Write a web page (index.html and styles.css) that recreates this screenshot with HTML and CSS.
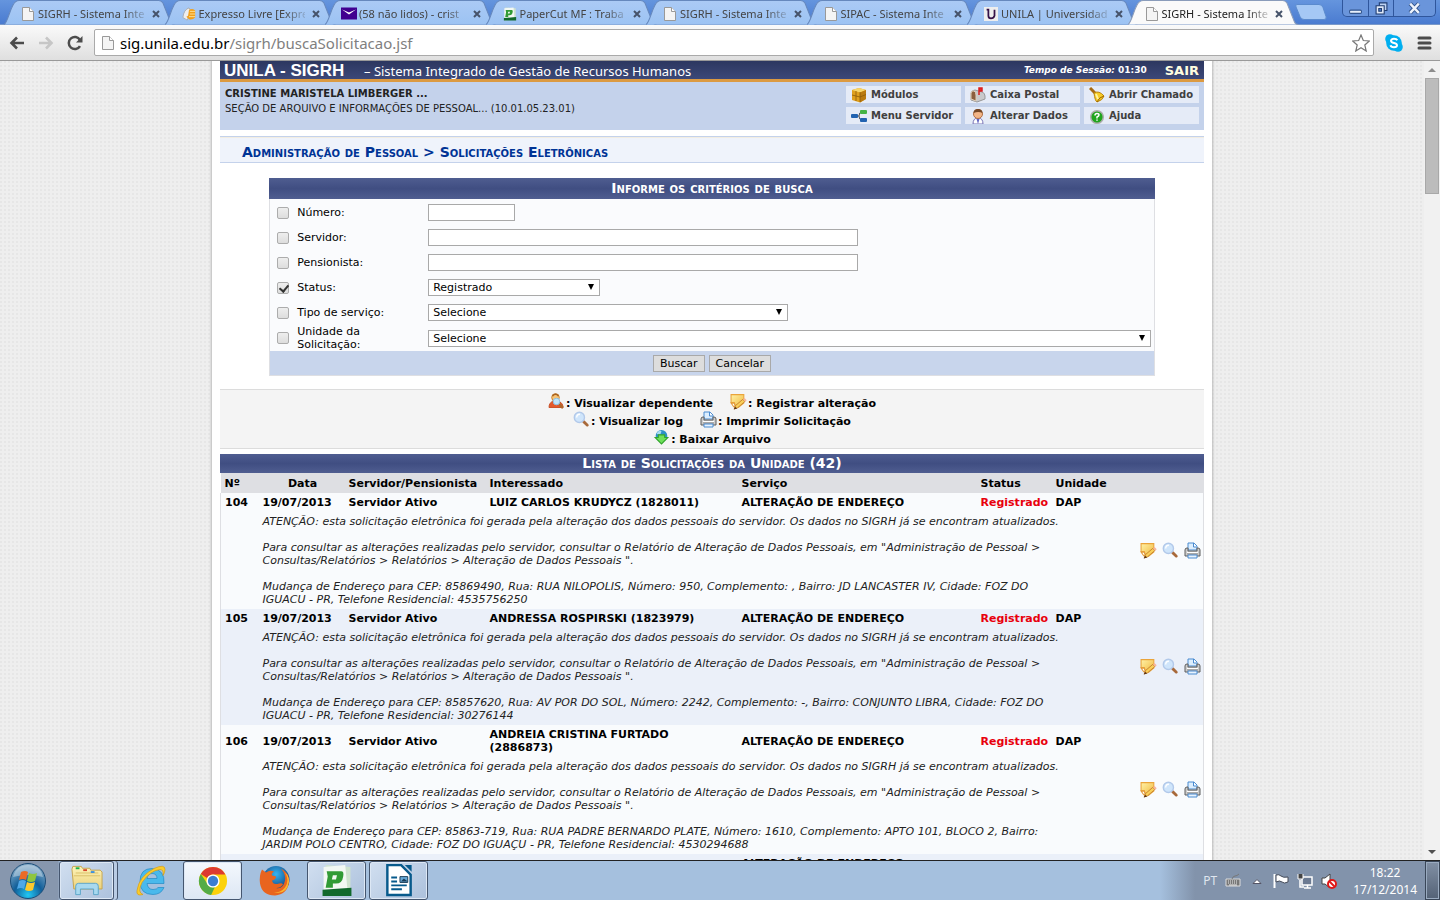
FILE: index.html
```html
<!DOCTYPE html>
<html lang="pt-BR">
<head>
<meta charset="utf-8">
<title>SIGRH - Sistema Integrado de Gestão de Recursos Humanos</title>
<link rel="stylesheet" href="styles.css">
</head>
<body>
<svg class="defs" aria-hidden="true">
  <defs>
    <linearGradient id="tabg" x1="0" y1="0" x2="0" y2="1"><stop offset="0" stop-color="#abcaf5"/><stop offset="1" stop-color="#9cc3f3"/></linearGradient>
    <linearGradient id="gold" x1="0" y1="0" x2="1" y2="1"><stop offset="0" stop-color="#fff2a8"/><stop offset="1" stop-color="#f0b73a"/></linearGradient>
    <radialGradient id="orb" cx=".5" cy=".9" r=".9"><stop offset="0" stop-color="#22c8f4"/><stop offset=".45" stop-color="#115f9a"/><stop offset="1" stop-color="#8fb2cc"/></radialGradient>
    <radialGradient id="globe" cx=".5" cy=".3" r=".7"><stop offset="0" stop-color="#35b5f2"/><stop offset="1" stop-color="#0c2a68"/></radialGradient>
    <linearGradient id="folder" x1="0" y1="0" x2="0" y2="1"><stop offset="0" stop-color="#fdf3b8"/><stop offset="1" stop-color="#ecd27c"/></linearGradient>
  </defs>
  <symbol id="tabshape" viewBox="0 0 172 25" preserveAspectRatio="none"><path d="M1 24.500C5 23 8 3 13 1.500Q14 .5 16 .5H155Q158 .5 159.500 3L167 22Q168 24.500 171 24.500"/></symbol>
  <symbol id="file" viewBox="0 0 13 14"><path d="M1 .5h7l4 4v9H1z" fill="#f4f4f4" stroke="#999"/><path d="M8 .5v4h4" fill="#fff" stroke="#999"/></symbol>
  <symbol id="note" viewBox="0 0 16 16"><path d="M1 1.500h12v8l-5 4-3-1.500-1-3H1z" fill="url(#gold)" stroke="#eaa43a"/><path d="M1 9.500h3l1 3.500H3.500z" fill="#fff" stroke="#e39a3a"/><path d="M5 12l7-6 2 2-7 6-3 1z" fill="#f9cf58" stroke="#c07a2b" stroke-width=".8"/><path d="M13 5.500l2 2" stroke="#f7b49b" stroke-width="2"/><path d="M3.500 15.500l1.300-2.500 2 1.500z" fill="#5d3211"/></symbol>
  <symbol id="lens" viewBox="0 0 16 16"><path d="M10 10l3.500 3.300" stroke="#a8693a" stroke-width="2.600" stroke-linecap="round"/><circle cx="6" cy="6" r="4.800" fill="#cfe5fb" stroke="#b2c9ea" stroke-width="1.300"/><path d="M3.500 6q0-3 3-3" stroke="#fff" stroke-width="1.300" fill="none"/></symbol>
  <symbol id="printer" viewBox="0 0 17 17"><path d="M4 8V1h6l3 3v4z" fill="#dceefe" stroke="#4a8bd0"/><path d="M9.500 1v4H13" fill="#fff" stroke="#4a8bd0"/><path d="M1 8q0-2 2-2h1v3h9V6h1q2 0 2 2v6H1z" fill="#ccc" stroke="#5e5e5e"/><path d="M3 10.500h11" stroke="#fff"/><path d="M3 12h11" stroke="#888"/><path d="M4 13h9v3H4z" fill="#e8f3fe" stroke="#4a8bd0"/></symbol>
  <symbol id="person" viewBox="0 0 17 17"><path d="M1 14.500q0-5.500 5-6.500h3q6 1 6 6.500z" fill="#e4592c" stroke="#c9532b"/><circle cx="7.500" cy="4.500" r="3.800" fill="#f7c374" stroke="#c98330"/><path d="M4.500 3q3-3.500 6 0" stroke="#a8621f" stroke-width="1.500" fill="none"/><path d="M11 11l4 4" stroke="#b0682e" stroke-width="2.500"/><circle cx="8.500" cy="8.500" r="3.300" fill="#bee4fb" stroke="#8fbfe0"/></symbol>
  <symbol id="down" viewBox="0 0 16 16"><circle cx="8" cy="6.500" r="5.500" fill="#2c91c7"/><path d="M3.500 4q2-3 4.500-2L7 5H4z" fill="#a9dcf2"/><path d="M5 5.500h6V8h3L8 14 2 8h3z" fill="#6fe05a" stroke="#32a52c"/></symbol>
  <symbol id="cube" viewBox="0 0 16 16"><path d="M1 3l7-2 7 2v9l-6 3.500L1 13z" fill="#dfa01d"/><path d="M1 3l7-2 7 2-6 2.500z" fill="#f7d66a"/><path d="M9 5.500L15 3v9l-6 3.500z" fill="#b97a10"/><path d="M1 8l8 2 6-2.500M5 4v10M9 5v10" stroke="#8d5c08" stroke-width=".8" fill="none"/></symbol>
  <symbol id="mail" viewBox="0 0 16 16"><path d="M1 13V6q1-3 4-3l7 2q3 1 3 4v3l-8 3z" fill="#c9c9cb" stroke="#999"/><path d="M1 6q1-3 3-2 2 1 2 4v6l-5-2z" fill="#8b5e3f" stroke="#e0cfba"/><path d="M9 8V1h3v3H9" stroke="#d91f20" stroke-width="1.500" fill="#ee2828"/></symbol>
  <symbol id="bell" viewBox="0 0 16 16"><path d="M1 1l6 6" stroke="#a66a12" stroke-width="3"/><path d="M5 6q5-3 10 3-1 4-7 6-2-1-3-9z" fill="#f7cc26" stroke="#b98410"/><path d="M8 15q2-5 7-6" fill="none" stroke="#9b6505"/><path d="M7 7l2 5" stroke="#fff4a0" stroke-width="2"/></symbol>
  <symbol id="tree" viewBox="0 0 16 16"><path d="M5 8h3m3-4q-3 0-3 4t3 4" fill="none" stroke="#555"/><rect y="6" width="7" height="4" rx="1" fill="#2162b0"/><rect x="9" y="2" width="7" height="4" rx="1" fill="#43b346"/><rect x="9" y="10" width="7" height="4" rx="1" fill="#2162b0"/></symbol>
  <symbol id="user" viewBox="0 0 16 16"><path d="M3 16q0-6 5-6t5 6z" fill="#fff" stroke="#7773b5"/><circle cx="8" cy="6" r="4.500" fill="#f2b587" stroke="#b06f45"/><path d="M3.500 5q0-4 4.500-4t4.500 4q-4-2-9 0z" fill="#754726"/><path d="M6.500 11L8 16l1.500-5z" fill="#6165c4"/></symbol>
  <symbol id="help" viewBox="0 0 16 16"><circle cx="8" cy="9" r="6.300" fill="#21a51e" stroke="#adadad" stroke-width="1.500"/><path d="M6 7.500q0-2 2-2t2 1.500q0 1-2 2v1.500m0 1v1.300" stroke="#fff" stroke-width="1.500" fill="none"/></symbol>
  <symbol id="pcut" viewBox="0 0 30 32"><path d="M4 1l24 2v24l-25 4z" fill="#cfe3cf"/><path d="M2 3l21-2 2 23-23 4z" fill="#f3f8f3"/><path d="M1 25l28-2v8H1z" fill="#11692c"/><path fill-rule="evenodd" d="M5 7h14q3 0 2 5-1 7-7 7h-3v4H4l2-11zM11 11l-1 4h4l1-4z" fill="#319b35"/></symbol>
</svg>

<header class="tabstrip">
  <nav class="tabs" aria-label="Abas">
    <div class="tab"><svg class="shape"><use href="#tabshape"/></svg><svg class="fav"><use href="#file"/></svg><span>SIGRH - Sistema Inte</span><button aria-label="Fechar"><svg viewBox="0 0 8 8"><path d="M1 1l6 6M7 1L1 7"/></svg></button></div>
    <div class="tab"><svg class="shape"><use href="#tabshape"/></svg><svg class="fav" viewBox="0 0 16 16"><path d="M1 12Q2 3 8 1l2 3-4 11z" fill="#eee" stroke="#aaa"/><path d="M8 3q5-2 7 1v8q-3 3-7 2l-3-3 2-1z" fill="#f2a01b"/><path d="M9 5h6M9 8h6M8 11h7" stroke="#ffe6a0"/></svg><span>Expresso Livre [Expre</span><button aria-label="Fechar"><svg viewBox="0 0 8 8"><path d="M1 1l6 6M7 1L1 7"/></svg></button></div>
    <div class="tab"><svg class="shape"><use href="#tabshape"/></svg><svg class="fav" viewBox="0 0 16 13"><path d="M0 0h16v12H0z" fill="#400090"/><path d="M1 2l7 5 7-5-7 3z" fill="#fff"/></svg><span>(58 não lidos) - crist</span><button aria-label="Fechar"><svg viewBox="0 0 8 8"><path d="M1 1l6 6M7 1L1 7"/></svg></button></div>
    <div class="tab"><svg class="shape"><use href="#tabshape"/></svg><svg class="fav"><use href="#pcut"/></svg><span>PaperCut MF : Traba</span><button aria-label="Fechar"><svg viewBox="0 0 8 8"><path d="M1 1l6 6M7 1L1 7"/></svg></button></div>
    <div class="tab"><svg class="shape"><use href="#tabshape"/></svg><svg class="fav"><use href="#file"/></svg><span>SIGRH - Sistema Inte</span><button aria-label="Fechar"><svg viewBox="0 0 8 8"><path d="M1 1l6 6M7 1L1 7"/></svg></button></div>
    <div class="tab"><svg class="shape"><use href="#tabshape"/></svg><svg class="fav"><use href="#file"/></svg><span>SIPAC - Sistema Inte</span><button aria-label="Fechar"><svg viewBox="0 0 8 8"><path d="M1 1l6 6M7 1L1 7"/></svg></button></div>
    <div class="tab"><svg class="shape"><use href="#tabshape"/></svg><svg class="fav" viewBox="0 0 16 16"><path d="M0 0h16v16H0z" fill="#eee"/><path d="M3 3h2v7q0 3 3 3t4-3V3" fill="none" stroke="#351248" stroke-width="2"/></svg><span>UNILA | Universidad</span><button aria-label="Fechar"><svg viewBox="0 0 8 8"><path d="M1 1l6 6M7 1L1 7"/></svg></button></div>
    <div class="tab active"><svg class="shape"><use href="#tabshape"/></svg><svg class="fav"><use href="#file"/></svg><span>SIGRH - Sistema Inte</span><button aria-label="Fechar"><svg viewBox="0 0 8 8"><path d="M1 1l6 6M7 1L1 7"/></svg></button></div>
  </nav>
  <button class="newtab" aria-label="Nova aba"><svg viewBox="0 0 32 16"><path d="M2 .5h22q3 0 4 3l3 9q1 3-2 3H9q-3 0-4-3L1 3Q0 .5 2 .5z" fill="#a5c8f5" stroke="#5b8bce"/></svg></button>
  <div class="wincontrols">
    <button aria-label="Minimizar"><svg viewBox="0 0 12 12"><rect x=".5" y="7.500" width="11" height="3" rx="1" fill="#e8f0fb" stroke="#33568f"/></svg></button>
    <button aria-label="Restaurar"><svg viewBox="0 0 12 12"><path d="M4 .8h7v7H4z" fill="#bdd3f3" stroke="#1f3c70"/><path d="M1 3.500h7.500v7.500H1z" fill="#dfe9f8" stroke="#1f3c70"/><path d="M3.500 6h2.500v2.500H3.500z" fill="#4d7dce" stroke="#1f3c70"/></svg></button>
    <button aria-label="Fechar janela"><svg viewBox="0 0 12 12"><path d="M2 1.500l8 8.500M10 1.500L2 10" stroke="#33568f" stroke-width="4"/><path d="M2 1.500l8 8.500M10 1.500L2 10" stroke="#edf3fc" stroke-width="2.200"/></svg></button>
  </div>
</header>

<div class="toolbar">
  <button aria-label="Voltar"><svg viewBox="0 0 16 16"><path d="M15 8H3M8 2.500L2.500 8 8 13.500" stroke="#4c4c4c" stroke-width="2.600" fill="none"/></svg></button>
  <button aria-label="Avançar"><svg viewBox="0 0 16 16"><path d="M1 8h12M8 2.500L13.500 8 8 13.500" stroke="#c6c6c6" stroke-width="2.600" fill="none"/></svg></button>
  <button aria-label="Recarregar"><svg viewBox="0 0 16 16"><path d="M13 11a6 6 0 1 1 0-6" stroke="#4c4c4c" stroke-width="2.500" fill="none"/><path d="M15.500 1v6.500H9z" fill="#4c4c4c"/></svg></button>
  <div class="address">
    <svg class="fav"><use href="#file"/></svg>
    <p>sig.unila.edu.br<span>/sigrh/buscaSolicitacao.jsf</span></p>
    <svg class="star" viewBox="0 0 18 18"><path d="M9 1l2.300 5.500 6 .5-4.500 4 1.400 6L9 13.800 3.800 17l1.400-6L.7 7l6-.5z" fill="#fff" stroke="#777" stroke-width="1.200"/></svg>
  </div>
  <button aria-label="Skype"><svg class="big" viewBox="0 0 18 18"><circle cx="9" cy="9" r="7.800" fill="#00aff0"/><circle cx="5" cy="5" r="4.800" fill="#00aff0"/><circle cx="13" cy="13" r="4.800" fill="#00aff0"/><path d="M12.300 6.300Q11.500 4.700 9 4.700T6 6.700Q6 8.300 9 9t3 2.300q0 2-3 2t-3.500-2" fill="none" stroke="#fff" stroke-width="2"/></svg></button>
  <button aria-label="Menu"><svg viewBox="0 0 16 16"><path d="M3 3h11M3 8h11M3 13h11" stroke="#4c4c4c" stroke-width="3" stroke-linecap="round"/></svg></button>
</div>

<div class="viewport">
  <div class="canvas">
  <main class="page">
    <header class="brand">
      <strong>UNILA - SIGRH</strong><span class="sub">– Sistema Integrado de Gestão de Recursos Humanos</span>
      <span class="session"><em>Tempo de Sessão:</em> 01:30</span><a class="exit" href="#">SAIR</a>
    </header>
    <section class="userbar">
      <div class="who"><strong>CRISTINE MARISTELA LIMBERGER ...</strong><p>SEÇÃO DE ARQUIVO E INFORMAÇÕES DE PESSOAL... (10.01.05.23.01)</p></div>
      <nav class="links">
        <a href="#"><svg><use href="#cube"/></svg>Módulos</a>
        <a href="#"><svg><use href="#mail"/></svg>Caixa Postal</a>
        <a href="#"><svg><use href="#bell"/></svg>Abrir Chamado</a>
        <a href="#"><svg><use href="#tree"/></svg>Menu Servidor</a>
        <a href="#"><svg><use href="#user"/></svg>Alterar Dados</a>
        <a href="#"><svg><use href="#help"/></svg>Ajuda</a>
      </nav>
    </section>
    <h1 class="crumb">Administração de Pessoal &gt; Solicitações Eletrônicas</h1>

    <form class="search">
      <h2 class="bar">Informe os critérios de busca</h2>
      <div class="row"><input type="checkbox" id="c1"><label for="c1">Número:</label><input class="num" type="text" aria-label="Número"></div>
      <div class="row"><input type="checkbox" id="c2"><label for="c2">Servidor:</label><input class="txt" type="text" aria-label="Servidor"></div>
      <div class="row"><input type="checkbox" id="c3"><label for="c3">Pensionista:</label><input class="txt" type="text" aria-label="Pensionista"></div>
      <div class="row"><input type="checkbox" id="c4" checked><label for="c4">Status:</label><span class="pick status"><select aria-label="Status"><option>Registrado</option></select></span></div>
      <div class="row"><input type="checkbox" id="c5"><label for="c5">Tipo de serviço:</label><span class="pick type"><select aria-label="Tipo de serviço"><option>Selecione</option></select></span></div>
      <div class="row"><input type="checkbox" id="c6"><label for="c6">Unidade da Solicitação:</label><span class="pick unit"><select aria-label="Unidade da Solicitação"><option>Selecione</option></select></span></div>
      <div class="actions"><button type="button">Buscar</button><button type="button">Cancelar</button></div>
    </form>

    <section class="legend">
      <p><span><svg><use href="#person"/></svg>: Visualizar dependente</span><span><svg><use href="#note"/></svg>: Registrar alteração</span></p>
      <p><span><svg><use href="#lens"/></svg>: Visualizar log</span><span><svg><use href="#printer"/></svg>: Imprimir Solicitação</span></p>
      <p><span><svg><use href="#down"/></svg>: Baixar Arquivo</span></p>
    </section>

    <table class="list">
      <caption class="bar">Lista de Solicitações da Unidade (42)</caption>
      <colgroup><col class="k1"><col class="k2"><col class="k3"><col class="k4"><col class="k5"><col class="k6"><col><col class="k8"></colgroup>
      <thead><tr><th>Nº</th><th class="mid">Data</th><th>Servidor/Pensionista</th><th>Interessado</th><th>Serviço</th><th>Status</th><th>Unidade</th><th></th></tr></thead>
      <tbody>
        <tr class="main"><td>104</td><td>19/07/2013</td><td>Servidor Ativo</td><td>LUIZ CARLOS KRUDYCZ (1828011)</td><td>ALTERAÇÃO DE ENDEREÇO</td><td class="red">Registrado</td><td>DAP</td><td rowspan="2" class="acts"><div><a href="#" aria-label="Registrar alteração"><svg><use href="#note"/></svg></a><a href="#" aria-label="Visualizar log"><svg><use href="#lens"/></svg></a><a href="#" aria-label="Imprimir"><svg><use href="#printer"/></svg></a></div></td></tr>
        <tr class="desc"><td></td><td colspan="6"><p>ATENÇÃO: esta solicitação eletrônica foi gerada pela alteração dos dados pessoais do servidor. Os dados no SIGRH já se encontram atualizados.</p><p>Para consultar as alterações realizadas pelo servidor, consultar o Relatório de Alteração de Dados Pessoais, em "Administração de Pessoal &gt; Consultas/Relatórios &gt; Relatórios &gt; Alteração de Dados Pessoais ".</p><p>Mudança de Endereço para CEP: 85869490, Rua: RUA NILOPOLIS, Número: 950, Complemento: , Bairro: JD LANCASTER IV, Cidade: FOZ DO IGUACU - PR, Telefone Residencial: 4535756250</p></td></tr>
      </tbody>
      <tbody>
        <tr class="main"><td>105</td><td>19/07/2013</td><td>Servidor Ativo</td><td>ANDRESSA ROSPIRSKI (1823979)</td><td>ALTERAÇÃO DE ENDEREÇO</td><td class="red">Registrado</td><td>DAP</td><td rowspan="2" class="acts"><div><a href="#" aria-label="Registrar alteração"><svg><use href="#note"/></svg></a><a href="#" aria-label="Visualizar log"><svg><use href="#lens"/></svg></a><a href="#" aria-label="Imprimir"><svg><use href="#printer"/></svg></a></div></td></tr>
        <tr class="desc"><td></td><td colspan="6"><p>ATENÇÃO: esta solicitação eletrônica foi gerada pela alteração dos dados pessoais do servidor. Os dados no SIGRH já se encontram atualizados.</p><p>Para consultar as alterações realizadas pelo servidor, consultar o Relatório de Alteração de Dados Pessoais, em "Administração de Pessoal &gt; Consultas/Relatórios &gt; Relatórios &gt; Alteração de Dados Pessoais ".</p><p>Mudança de Endereço para CEP: 85857620, Rua: AV POR DO SOL, Número: 2242, Complemento: -, Bairro: CONJUNTO LIBRA, Cidade: FOZ DO IGUACU - PR, Telefone Residencial: 30276144</p></td></tr>
      </tbody>
      <tbody>
        <tr class="main"><td>106</td><td>19/07/2013</td><td>Servidor Ativo</td><td>ANDREIA CRISTINA FURTADO (2886873)</td><td>ALTERAÇÃO DE ENDEREÇO</td><td class="red">Registrado</td><td>DAP</td><td rowspan="2" class="acts"><div><a href="#" aria-label="Registrar alteração"><svg><use href="#note"/></svg></a><a href="#" aria-label="Visualizar log"><svg><use href="#lens"/></svg></a><a href="#" aria-label="Imprimir"><svg><use href="#printer"/></svg></a></div></td></tr>
        <tr class="desc"><td></td><td colspan="6"><p>ATENÇÃO: esta solicitação eletrônica foi gerada pela alteração dos dados pessoais do servidor. Os dados no SIGRH já se encontram atualizados.</p><p>Para consultar as alterações realizadas pelo servidor, consultar o Relatório de Alteração de Dados Pessoais, em "Administração de Pessoal &gt; Consultas/Relatórios &gt; Relatórios &gt; Alteração de Dados Pessoais ".</p><p>Mudança de Endereço para CEP: 85863-719, Rua: RUA PADRE BERNARDO PLATE, Número: 1610, Complemento: APTO 101, BLOCO 2, Bairro: JARDIM POLO CENTRO, Cidade: FOZ DO IGUAÇU - PR, Telefone Residencial: 4530294688</p></td></tr>
      </tbody>
      <tbody>
        <tr class="main"><td></td><td></td><td></td><td></td><td>ALTERAÇÃO DE ENDEREÇO</td><td></td><td></td><td></td></tr>
      </tbody>
    </table>
  </main>
  </div>
  <div class="scroll"><svg viewBox="0 0 16 16"><path d="M4 11l4-4 4 4z" fill="#8c8c8c"/></svg><div class="thumb"></div><svg class="end" viewBox="0 0 16 16"><path d="M4 6l4 4 4-4z" fill="#505050"/></svg></div>
</div>

<footer class="taskbar">
  <button class="start" aria-label="Iniciar"><svg viewBox="0 0 36 36"><circle cx="18" cy="18" r="17.500" fill="url(#orb)" stroke="#1c4d78"/><path d="M3 14Q6 2 18 2t15 12Q18 10 3 14z" fill="#fff" opacity=".35"/><path d="M11 9q4-2 7 0l-2 8q-3-2-7 0z" fill="#ea6b27"/><path d="M19 10q4 2 8 0l-2 8q-4 2-8 0z" fill="#8ec63f"/><path d="M9 18q4-2 7 0l-2 8q-3-2-7 0z" fill="#4fa8e8"/><path d="M17 19q4 2 8 0l-2 8q-4 2-8 0z" fill="#fdc92d"/></svg></button>
  <button class="task stack" aria-label="Explorer"><svg viewBox="0 0 34 32"><path d="M1 4l1-3h9l1 2h8l1 2h10l2 2v18H3z" fill="url(#folder)" stroke="#c4a34c"/><path d="M3 11h28M5 8h24" stroke="#d9bd67"/><path d="M5 2h4v2H5z" fill="#18b04b"/><path d="M13 4h4v2h-4z" fill="#d8452a"/><path d="M21 6h4v2h-4z" fill="#3a8fe0"/><path d="M5 31V22q0-3 3-3h18q3 0 3 3v9h-5v-6H10v6z" fill="#a8d9ef" stroke="#5ba4c7"/></svg></button>
  <button class="task plain" aria-label="Internet Explorer"><svg viewBox="0 0 32 32"><path fill-rule="evenodd" d="M29 19H12q1 6 6 6 4 0 5-2h6q-3 7-11 7Q5 30 5 17T17 4q13 1 12 15zM12 14h10q0-5-5-5-4 0-5 5z" fill="#49b9ec" stroke="#2489c4" stroke-width=".7"/><path d="M8 30Q1 32 2 26 4 12 19 4 30-1 30 5q0 3-2 6 1-6-3-6Q15 6 7 18 2 28 8 30z" fill="#f9cc2c" stroke="#d79c16" stroke-width=".7"/></svg></button>
  <button class="task lit" aria-label="Chrome"><svg class="mid" viewBox="0 0 32 32"><circle cx="16" cy="16" r="15" fill="#fcd20b"/><path d="M3 8.500A15 15 0 0 1 29.200 9H16a7 7 0 0 0-6 4z" fill="#dd3a31"/><path d="M3 8.500L10 19a7 7 0 0 0 8 3.500L14 31A15 15 0 0 1 3 8.500z" fill="#54ac47"/><circle cx="16" cy="16" r="7" fill="#fff"/><circle cx="16" cy="16" r="5.500" fill="#3b7dd0"/></svg></button>
  <button class="task plain" aria-label="Firefox"><svg viewBox="0 0 32 32"><circle cx="17" cy="15" r="13.500" fill="url(#globe)"/><path d="M3 5l4 3q4-3 8-1-3 2-2 4l4 1q0 3-4 4 1 5 7 3 3-1 4 1-4 5-9 3 9 3 11-7 1-6-4-12 9 5 8 14-2 12-14 13Q3 31 1 19 0 11 3 5z" fill="#e9641f"/><path d="M26 8q5 8 0 15-5 6-12 5 14 3 16-11 0-6-4-9z" fill="#fbb52c"/></svg></button>
  <button class="task" aria-label="PaperCut"><svg viewBox="0 0 30 32"><use href="#pcut"/></svg></button>
  <button class="task" aria-label="LibreOffice Writer"><svg viewBox="0 0 32 34"><path d="M4 1h14l10 10v21H4z" fill="#fff" stroke="#075a8c" stroke-width="2.500"/><path d="M22 1h7v7z" fill="#075a8c"/><path d="M8 14h6M8 18h6M8 22h16M8 26h11" stroke="#075a8c" stroke-width="2"/><path d="M17 13h8v6h-8z" fill="#65a9d8" stroke="#1b3d57"/><path d="M18 18l3-3 4 3z" fill="#1b3d57"/></svg></button>
  <div class="tray">
    <span class="lang">PT</span>
    <svg viewBox="0 0 16 16"><path d="M1 6h14v7H1z" fill="#777" stroke="#ddd"/><path d="M3 8h10M3 10h10" stroke="#eee" stroke-dasharray="1 1"/><path d="M4 12h8" stroke="#eee"/><path d="M7 6q1-3 3-3t4-2" stroke="#777" fill="none"/></svg>
    <svg viewBox="0 0 16 16"><path d="M4 10.500l4-4 4 4z" fill="#fff" stroke="#556"/></svg>
    <svg viewBox="0 0 16 16"><path d="M1.500 1v14" stroke="#fff" stroke-width="2"/><path d="M3 2q3-1 5 1t7 1v5q-4 2-6 0T3 9z" fill="#fff" stroke="#444b59"/></svg>
    <svg viewBox="0 0 16 16"><path d="M5 4h10v8H5z" fill="#6b7a92" stroke="#fff" stroke-width="1.500"/><path d="M7 15h7M10.500 12v3M3 7v7h4" stroke="#fff" stroke-width="1.500" fill="none"/><path d="M1 1v5h5V1" fill="#444" stroke="#fff"/></svg>
    <svg viewBox="0 0 16 16"><path d="M1 5h3l5-4v14l-5-4H1z" fill="#fff" stroke="#444"/><circle cx="11" cy="11" r="4" fill="#fff" stroke="#e01818" stroke-width="2"/><path d="M8 8l6 6" stroke="#e01818" stroke-width="2"/></svg>
    <div class="clock"><span>18:22</span><span>17/12/2014</span></div>
    <div class="desk"></div>
  </div>
</footer>
</body>
</html>
```

FILE: styles.css
```css
* { box-sizing: border-box; }
html, body { height: 100%; }
body { margin: 0; display: flex; flex-direction: column; overflow: hidden; font: 11px/13px Verdana, "DejaVu Sans", sans-serif; color: #000; }
p, h1, h2 { margin: 0; }
button { font: inherit; padding: 0; border: 0; background: none; }
a { color: inherit; text-decoration: none; }
svg { display: block; }
.defs { position: absolute; width: 0; height: 0; }

/* window chrome */
.tabstrip { height: 25px; flex: none; display: flex; background: linear-gradient(#6595de, #4a7bd0); font: 11px/16px "Segoe UI", "Noto Sans", sans-serif; border-bottom: 1px solid #7a99c9; }
.tabs { display: flex; flex: 0 1 1299px; min-width: 0; padding-left: 3px; }
.tab { position: relative; flex: 1; min-width: 0; height: 25px; display: flex; align-items: center; gap: 2px; padding: 2px 15px 0 17px; margin-right: -12px; color: #444; }
.tab:last-child { margin-right: 0; }
.tab .shape { position: absolute; left: 0; top: 0; width: 100%; height: 25px; fill: url(#tabg); stroke: #6688bd; }
.tab.active { z-index: 1; color: #222; }
.tab.active .shape { fill: #fafafa; stroke: #8a9cba; }
.fav { position: relative; width: 16px; height: 14px; flex: none; }
.tab span { position: relative; flex: 1; min-width: 0; white-space: nowrap; -webkit-mask-image: linear-gradient(to right, #000 80%, transparent 105%); mask-image: linear-gradient(to right, #000 80%, transparent 105%); }
.tab button { position: relative; width: 14px; flex: none; }
.tab button svg { width: 8px; height: 8px; margin-left: 5px; stroke: #46536a; stroke-width: 2; }
.newtab { width: 32px; flex: none; margin-left: -4px; }
.newtab svg { width: 32px; height: 16px; }
.wincontrols { margin: 0 4px 0 auto; display: flex; height: 17px; border: 1px solid #2f569c; border-top: 0; border-radius: 0 0 5px 5px; background: #6a95db; }
.wincontrols button { width: 25px; display: grid; place-items: center; border-left: 1px solid #2f569c; }
.wincontrols button:first-child { border-left: 0; }
.wincontrols button:last-child { width: 42px; }
.wincontrols svg { width: 13px; height: 13px; }

.toolbar { height: 36px; flex: none; display: flex; align-items: center; gap: 13px; padding: 0 8px 0 9px; background: linear-gradient(#fafafa, #dfdfdf); border-bottom: 1px solid #999; }
.toolbar button svg { width: 16px; height: 16px; }
.toolbar button svg.big { width: 18px; height: 18px; }
.address { flex: 1; height: 27px; margin: 0 -2px 0 -2px; display: flex; align-items: center; gap: 4px; padding: 0 3px 0 5px; background: #fff; border: 1px solid #aaa; border-radius: 2px; font: 15px/20px "Segoe UI", "Noto Sans", sans-serif; }
.address p { flex: 1; }
.address p span { color: #808080; }
.address .star { width: 18px; height: 18px; }

/* scrolled document */
.viewport { flex: 1; min-height: 0; display: flex; }
.canvas { flex: 1; min-width: 0; overflow: hidden; background: radial-gradient(circle at 1px 1px, #e6e6e6 1px, transparent 1px) 0 0 / 4px 4px #eee; }
.page { max-width: 1000px; min-height: 100%; margin: 0 auto; padding: 0 8px; background: #fff; box-shadow: 0 0 2px 1px #bbb; }
.scroll { width: 16px; flex: none; display: flex; flex-direction: column; background: #f1f1f1; }
.scroll svg { width: 16px; height: 16px; }
.scroll .thumb { height: 116px; margin: 1px; background: #bcbcbc; border: 1px solid #a8a8a8; }
.scroll .end { margin-top: auto; }

.brand { height: 21px; display: flex; align-items: center; padding: 1px 5px 0 4px; color: #fff; background: linear-gradient(#2c3760, #3c4878); border-bottom: 3px solid #dc9a41; }
.brand strong { font: bold 17px/18px Arial, "Liberation Sans", sans-serif; width: 140px; }
.brand .sub { font: 13px/18px Tahoma, "Noto Sans", sans-serif; }
.brand .session { margin-left: auto; font-size: 9px; font-weight: bold; }
.brand .exit { margin-left: 18px; font-size: 13px; font-weight: bold; color: #fffde0; }
.userbar { height: 48px; display: flex; justify-content: space-between; padding: 4px 5px; background: #c4d2eb; color: #222; font-size: 10px; line-height: 15px; }
.links { display: grid; grid-template-columns: repeat(3, 115px); grid-auto-rows: 17px; gap: 4px; }
.links a { display: flex; align-items: center; gap: 4px; padding-left: 5px; background: #e5ebf7; color: #404040; font-weight: bold; }
.links svg { width: 16px; height: 16px; flex: none; }
.crumb { margin-top: 6px; padding: 8px 22px 2px; background: #eff3fb; border-top: 1px solid #c4d2eb; border-bottom: 1px solid #c4d2eb; box-shadow: inset 0 1px #f2ede2; font-size: 14px; line-height: 15px; font-variant: small-caps; color: #003395; }
.bar { color: #fff; text-align: center; font-size: 14px; font-variant: small-caps; font-weight: bold; background: linear-gradient(#4f5d90, #404e82 50%, #4f5d90); }

.search { width: 90%; margin: 15px auto 0; border: 1px solid #dedfe3; border-top: 0; background: #fafbfd; }
.search h2 { line-height: 21px; margin: 0 -1px 1px; }
.row { min-height: 25px; display: flex; align-items: center; padding: 0 3px 0 7px; }
.row label { width: 139px; padding: 0 30px 0 8px; flex: none; }
.row input[type=checkbox] { appearance: none; position: relative; width: 12px; height: 12px; flex: none; margin: 0; border: 1px solid #acacac; border-radius: 2px; background: linear-gradient(#eee, #ddd); }
.row input:checked::after { content: ""; position: absolute; left: 3px; top: 0; width: 4px; height: 7px; border: solid #333; border-width: 0 2px 2px 0; transform: rotate(40deg); }
.row input[type=text], .row select { height: 17px; border: 1px solid #a9a9a9; border-radius: 0; background: #fff; padding: 0 4px; font: inherit; color: #000; }
.num { width: 87px; }
.txt { width: 430px; }
.pick { position: relative; }
.pick select { appearance: none; display: block; width: 100%; }
.pick::after { content: ""; position: absolute; right: 6px; top: 5px; border: 3px solid transparent; border-top: 6px solid #000; border-bottom: 0; pointer-events: none; }
.status { width: 172px; }
.type { width: 360px; }
.unit { flex: 1; }
.actions { height: 24px; display: flex; justify-content: center; align-items: center; gap: 4px; background: #c8d5ec; }
.actions button { height: 17px; padding: 0 6px; border: 1px solid #a9a9a9; background: #ddd; }

.legend { margin: 13px 0 5px; padding: 4px 0 0; background: #f4f4f4; border: solid #dcdcdc; border-width: 1px 0; font-weight: bold; }
.legend p { display: flex; justify-content: center; gap: 17px; height: 18px; }
.legend span { display: flex; align-items: center; gap: 1px; }
.legend svg { width: 17px; height: 17px; margin-bottom: 3px; }

.list { width: 100%; border-collapse: collapse; table-layout: fixed; font-weight: bold; }
.list caption { line-height: 19px; }
.list thead { background: #dedfe3; }
.list th, .list td { padding: 0; text-align: left; white-space: nowrap; }
.list th { height: 20px; }
.list th:first-child, .list td:first-child { padding-left: 4px; }
.list th.mid { text-align: center; padding-right: 6px; }
.list tbody { background: #f9fbfd; border: solid #dedfe3; border-width: 0 1px; }
.list tbody:nth-of-type(even) { background: #ebf0f9; }
.list .main td { height: 20px; padding-top: 3px; padding-bottom: 4px; }
.list .main td:nth-child(4) { white-space: normal; padding-right: 40px; }
.list .red { color: #e8000c; }
.list .desc td { height: 96px; white-space: normal; vertical-align: top; padding: 2px 70px 0 0; font-weight: normal; font-style: italic; color: #222; }
.list .desc td:first-child { padding: 0; }
.desc p + p { margin-top: 13px; }
.k1 { width: 42px; }
.k2 { width: 86px; }
.k3 { width: 141px; }
.k4 { width: 252px; }
.k5 { width: 239px; }
.k6 { width: 75px; }
.k8 { width: 66px; }
.acts div { display: flex; align-items: center; gap: 5px; padding-left: 2px; }
.acts svg { width: 17px; height: 17px; }

/* taskbar */
.taskbar { height: 40px; flex: none; display: flex; gap: 3px; background: linear-gradient(to right, #8797ae 0, #8797ae 58px, #a5c0de 60px, #a5c0de 1160px, #8293ab 1195px); border-top: 1px solid #222; color: #fff; }
.start { width: 56px; display: grid; place-items: center; }
.start svg { width: 36px; height: 36px; }
.task { width: 59px; display: grid; place-items: center; border: 1px solid #45566f; border-radius: 3px; box-shadow: inset 0 0 0 1px #dde8f5; background: linear-gradient(135deg, #d1dff0, #acc1dc); }
.task svg { width: 32px; height: 33px; }
.task svg.mid { width: 30px; height: 30px; }
.stack { width: 55px; margin-right: 4px; box-shadow: inset 0 0 0 1px #dde8f5, 3px 0 #b9cce4, 4px 0 #45566f; }
.plain { background: none; border-color: transparent; box-shadow: none; }
.lit { background: linear-gradient(#f4f8fd, #dde7f4); }
.tray { margin-left: auto; display: flex; align-items: center; gap: 8px; font: 12px/17px "Segoe UI", "Noto Sans", sans-serif; }
.tray svg { width: 16px; height: 16px; }
.tray .lang { color: #dfe6ef; line-height: 22px; }
.clock { display: flex; flex-direction: column; align-items: center; margin-left: 8px; }
.desk { width: 15px; align-self: stretch; border: 1px solid #394658; background: linear-gradient(#8190a5, #546276); box-shadow: inset 0 0 0 1px #9aabc0; }
```
